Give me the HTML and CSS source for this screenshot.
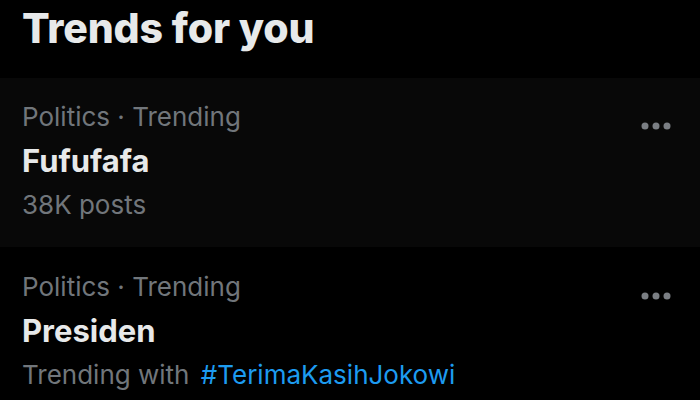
FILE: index.html
```html
<!DOCTYPE html>
<html lang="en">
<head>
<meta charset="utf-8">
<link rel="stylesheet" href="styles.css">
</head>
<body>
<div class="panel">
  <h2 class="heading">Trends for you</h2>
  <div class="trend hover">
    <div class="info">
      <div class="meta">Politics · Trending</div>
      <div class="name">Fufufafa</div>
      <div class="meta sub">38K posts</div>
    </div>
    <svg class="more" width="40" height="12" viewBox="0 0 40 12"><circle cx="9" cy="6" r="3.5"/><circle cx="20" cy="6" r="3.5"/><circle cx="31" cy="6" r="3.5"/></svg>
  </div>
  <div class="trend">
    <div class="info">
      <div class="meta">Politics · Trending</div>
      <div class="name">Presiden</div>
      <div class="meta sub">Trending with <span class="tag">#TerimaKasihJokowi</span></div>
    </div>
    <svg class="more" width="40" height="12" viewBox="0 0 40 12"><circle cx="9" cy="6" r="3.5"/><circle cx="20" cy="6" r="3.5"/><circle cx="31" cy="6" r="3.5"/></svg>
  </div>
</div>
</body>
</html>
```
FILE: styles.css
```css
html, body {
  margin: 0;
  padding: 0;
  background: #000;
}
body {
  width: 700px;
  height: 400px;
  overflow: hidden;
  font-family: Inter, "Noto Sans", sans-serif;
  color: #e7e9ea;
}
.heading {
  margin: 0;
  padding: 4px 22px 0;
  height: 74px;
  font-size: 41px;
  line-height: 48px;
  font-weight: 800;
  color: #e7e9ea;
  letter-spacing: -0.15px;
}
.trend {
  display: flex;
  justify-content: space-between;
  align-items: flex-start;
  padding: 23px 24px 26px 22px;
}
.trend.hover {
  background: #080808;
}
.trend + .trend {
  padding-top: 24px;
}
.meta {
  font-size: 26px;
  line-height: 32px;
  color: #71767b;
}
.meta.sub {
  margin-top: 8px;
}
.name {
  margin-top: 8px;
  font-size: 31px;
  line-height: 40px;
  font-weight: 700;
  color: #e7e9ea;
}
.tag {
  color: #1d9bf0;
  margin-left: 4px;
}
.more {
  fill: #7a7e83;
  margin-top: 19px;
}
```
